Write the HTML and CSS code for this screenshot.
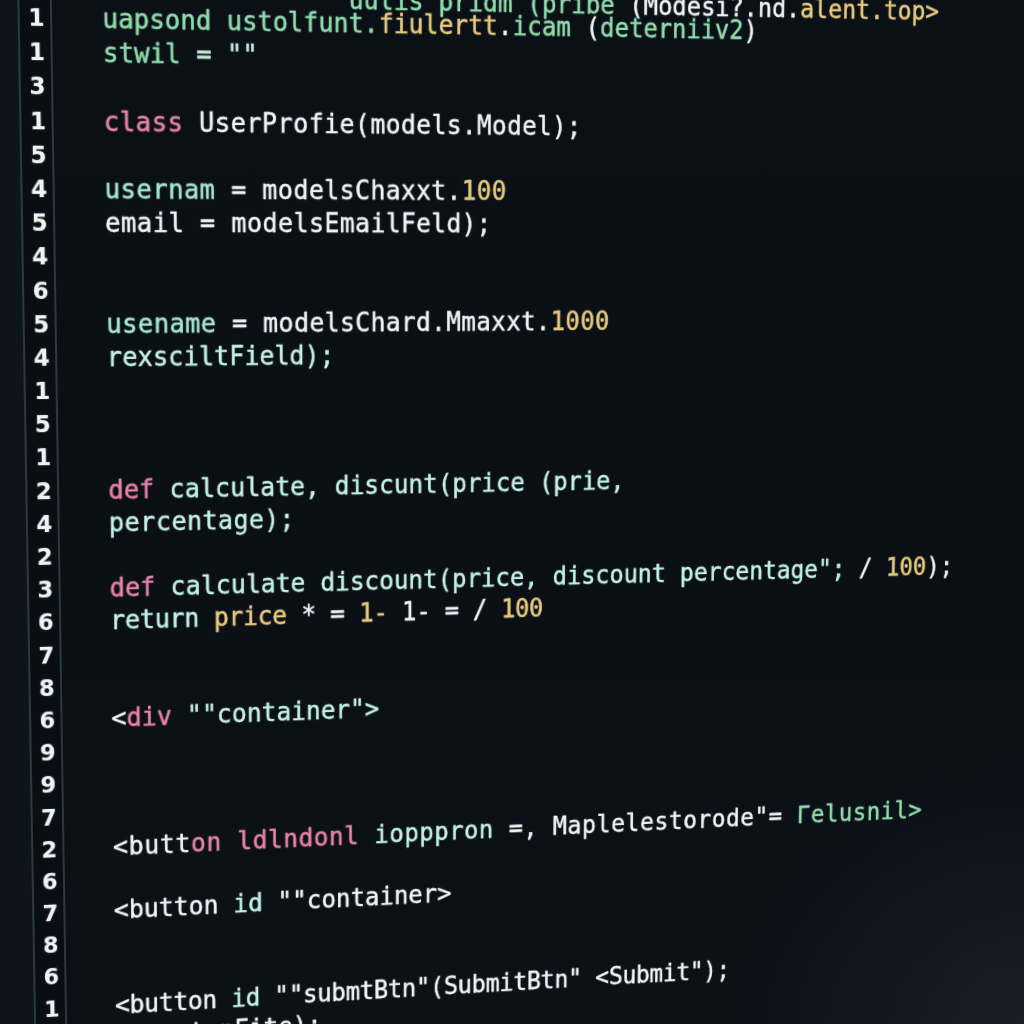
FILE: index.html
```html
<!DOCTYPE html>
<html lang="en">
<head>
<meta charset="utf-8">
<title>Editor</title>
<link rel="stylesheet" href="styles.css">
</head>
<body>
<div class="screen">
  <div class="editor">
    <div class="margin"></div>
    <div class="gutter">
      <div class="ln">1</div><div class="ln">1</div><div class="ln">3</div><div class="ln">1</div>
      <div class="ln">5</div><div class="ln">4</div><div class="ln">5</div><div class="ln">4</div>
      <div class="ln">6</div><div class="ln">5</div><div class="ln">4</div><div class="ln">1</div>
      <div class="ln">5</div><div class="ln">1</div><div class="ln">2</div><div class="ln">4</div>
      <div class="ln">2</div><div class="ln">3</div><div class="ln">6</div><div class="ln">7</div>
      <div class="ln">8</div><div class="ln">6</div><div class="ln">9</div><div class="ln">9</div>
      <div class="ln">7</div><div class="ln">2</div><div class="ln">6</div><div class="ln">7</div>
      <div class="ln">8</div><div class="ln">6</div><div class="ln">1</div><div class="ln">4</div>
    </div>
    <div class="code">
      <div class="line partial">                <span class="g">uulis pridm (pribe </span><span class="w">(Modesi?.nd.</span><span class="y">alent.top&gt;</span></div>
      <div class="line"><span class="g">uapsond ustolfunt.</span><span class="y">fiulertt</span><span class="w">.</span><span class="g">icam </span><span class="w">(</span><span class="g">deterniiv2</span><span class="w">)</span></div>
      <div class="line"><span class="g">stwil</span><span class="lg"> = ""</span></div>
      <div class="line"></div>
      <div class="line wide"><span class="p">class</span><span class="w"> UserProfie(models.Model);</span></div>
      <div class="line"></div>
      <div class="line wide"><span class="t">usernam</span><span class="w"> = modelsChaxxt.</span><span class="y">100</span></div>
      <div class="line wide"><span class="w">email = modelsEmailFeld);</span></div>
      <div class="line"></div>
      <div class="line"></div>
      <div class="line wide"><span class="t">usename</span><span class="w"> = modelsChard.Mmaxxt.</span><span class="y">1000</span></div>
      <div class="line"><span class="m">rexsciltField);</span></div>
      <div class="line"></div>
      <div class="line"></div>
      <div class="line"></div>
      <div class="line"><span class="p">def</span><span class="m"> calculate, discunt(price (prie,</span></div>
      <div class="line wide"><span class="m">percentage);</span></div>
      <div class="line"></div>
      <div class="line"><span class="p">def</span><span class="m"> calculate discount(price, discount percentage"; </span><span class="w">/ </span><span class="y">100</span><span class="w">);</span></div>
      <div class="line narrow"><span class="m">return </span><span class="y">price</span><span class="w"> * = </span><span class="y">1-</span><span class="w"> 1- = / </span><span class="y">100</span></div>
      <div class="line"></div>
      <div class="line"></div>
      <div class="line"><span class="w">&lt;</span><span class="p">div</span><span class="m"> ""container"&gt;</span></div>
      <div class="line"></div>
      <div class="line"></div>
      <div class="line"></div>
      <div class="line wider"><span class="w">&lt;butt</span><span class="p">on ldlndonl</span><span class="m"> iopppron </span><span class="w">=, Maplelestorode"= </span><span class="g">Γelusnil&gt;</span></div>
      <div class="line"></div>
      <div class="line"><span class="w">&lt;button </span><span class="m">id </span><span class="w">""container&gt;</span></div>
      <div class="line"></div>
      <div class="line"></div>
      <div class="line narrow"><span class="w">&lt;button </span><span class="m">id </span><span class="w">""submtBtn"(SubmitBtn" &lt;Submit");</span></div>
      <div class="line"><span class="w">    utonFite);</span></div>
    </div>
  </div>
</div>
</body>
</html>
```

FILE: styles.css
```css
html, body {
  margin: 0;
  padding: 0;
}

body {
  background: #0a0e14;
  overflow: hidden;
}

.screen {
  width: 1024px;
  height: 1024px;
  overflow: hidden;
  background:
    radial-gradient(ellipse 420px 380px at 100% 100%, rgba(40, 48, 56, 0.45), rgba(40, 48, 56, 0) 70%),
    linear-gradient(180deg, #0b1017 0%, #0a0e15 50%, #0c1118 100%);
}

.editor {
  display: flex;
  width: 1160px;
  height: 1120px;
  margin-left: -30px;
  transform-origin: 30px 520px;
  transform: rotate(-1deg) perspective(1000px) rotateX(-2.5deg) rotateY(4.4deg);
}

.margin {
  flex: none;
  width: 56px;
  background: #0e141b;
}

.gutter {
  flex: none;
  width: 30px;
  padding-top: 11px;
  border-left: 2px solid #2c3a40;
  border-right: 2px solid #2c3a40;
  background: #0a0e14;
  font-family: "DejaVu Sans", sans-serif;
  font-weight: bold;
  font-size: 23px;
  color: #eef3f3;
  text-align: center;
  text-shadow: 0 0 2px rgba(230, 240, 240, 0.35);
}

.ln {
  height: 33.2px;
  line-height: 33.2px;
  padding-left: 3px;
}

.code {
  flex: 1;
  padding-top: 11px;
  padding-left: 50px;
  font-family: "DejaVu Sans Mono", monospace;
  font-size: 26px;
  color: #eaf2ef;
  -webkit-text-stroke: 0.35px currentColor;
}

.line {
  height: 33.2px;
  line-height: 33.2px;
  white-space: pre;
  text-shadow: 0 0 2px rgba(200, 240, 225, 0.3);
}

.partial {
  height: 23px;
  margin-top: -23px;
}

.wide { letter-spacing: 0.4px; }
.wider { letter-spacing: 0.6px; }
.narrow { letter-spacing: -0.35px; }

.w { color: #edf4f1; }
.g { color: #8edca9; }
.lg { color: #c8eed8; }
.y { color: #e9c878; }
.p { color: #ec7fa4; }
.t { color: #a2e6d2; }
.m { color: #c2f1e2; }
```
